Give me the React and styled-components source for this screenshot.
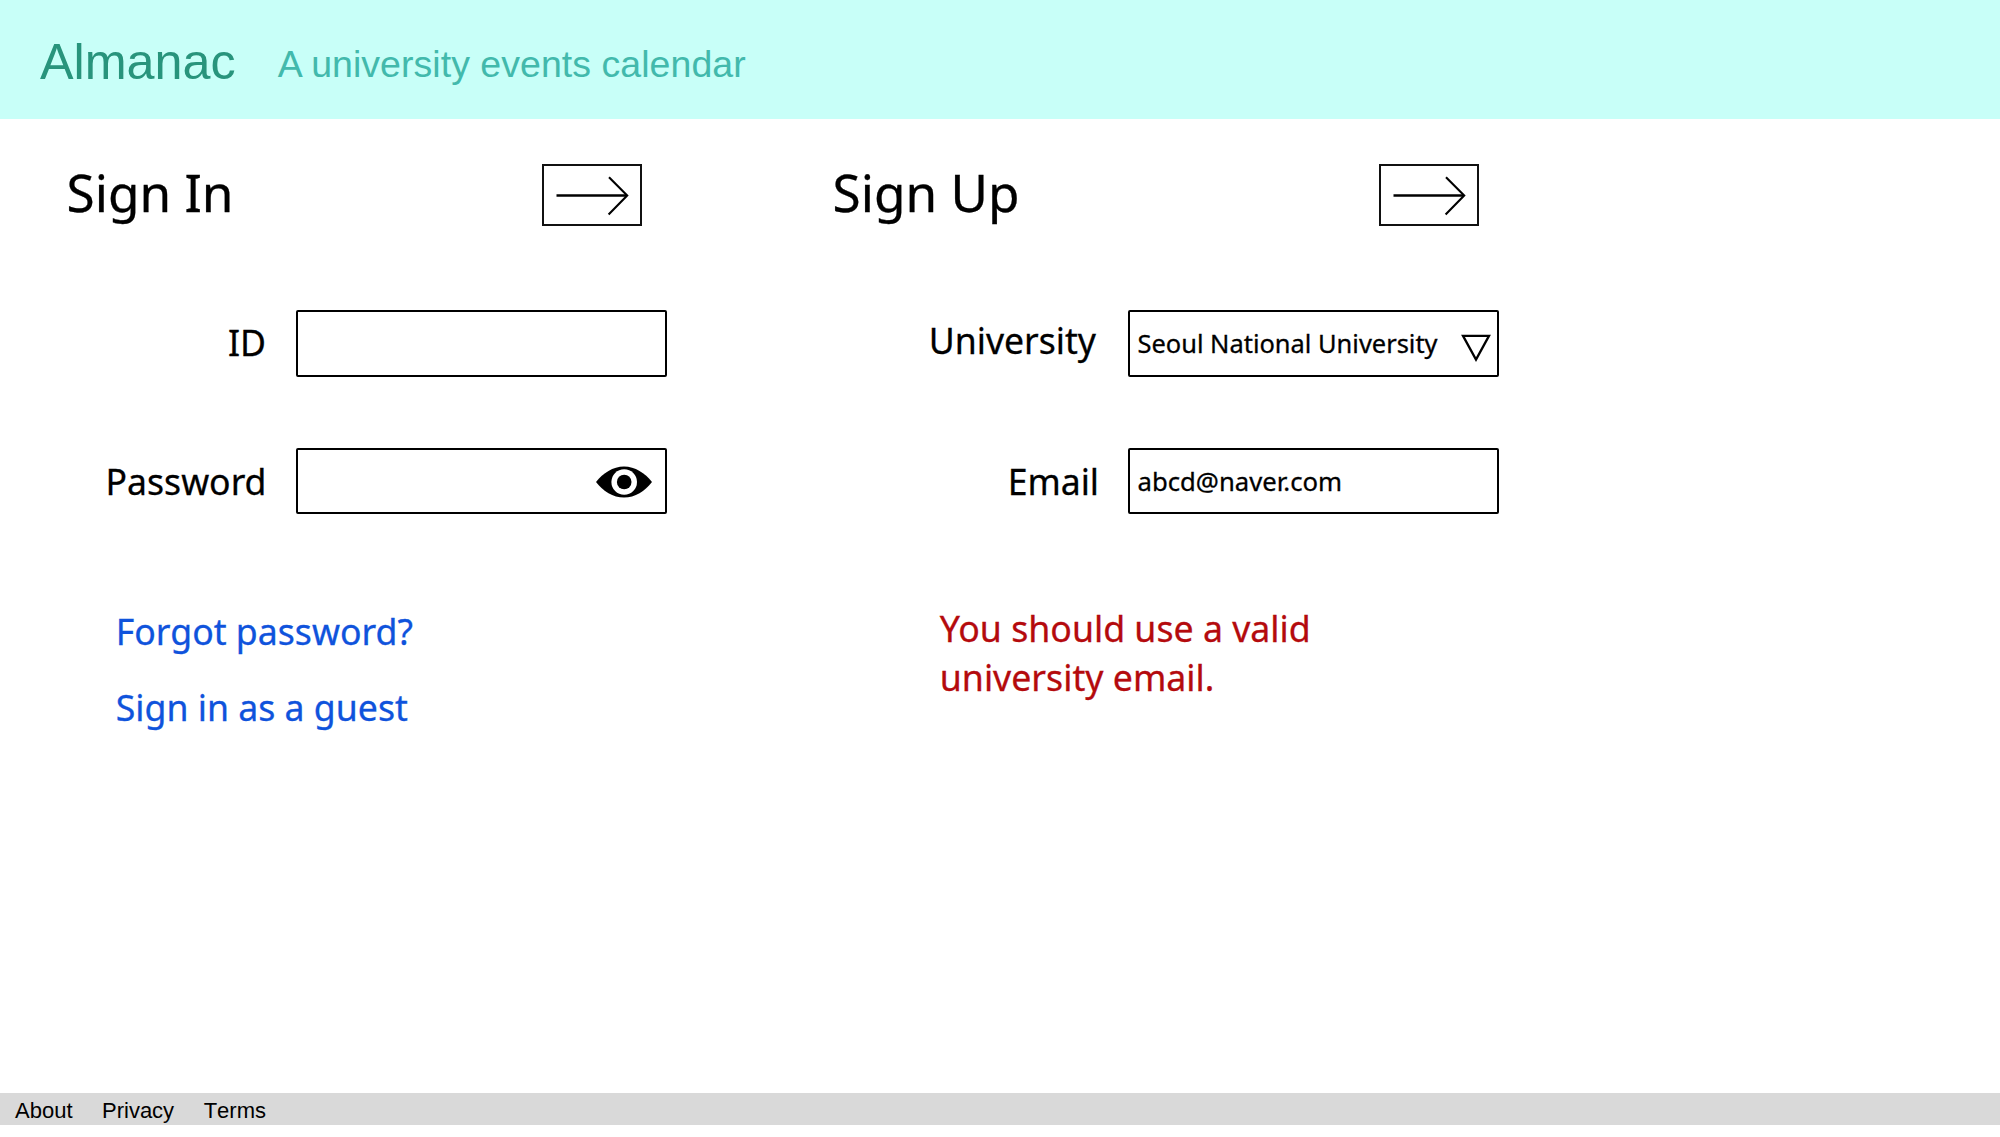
import React from 'react';
import styled, { createGlobalStyle } from 'styled-components';

const GlobalStyle = createGlobalStyle`
  *, *::before, *::after { box-sizing: border-box; }
  html, body { margin: 0; background: #fff; }
  body { font-family: "Noto Sans", "Open Sans", sans-serif; color: #000; }
`;

const Page = styled.div`
  display: flex;
  flex-direction: column;
  height: 1137px;
  padding-bottom: 12px;
  overflow: hidden;
`;

const Header = styled.header`
  display: flex;
  align-items: flex-start;
  gap: 42px;
  height: 119px;
  padding: 32.5px 40px 0;
  background: #c8fff8;
  font-family: "Liberation Sans", Arial, sans-serif;
`;

const Brand = styled.h1`
  margin: 0;
  font-size: 50.3px;
  font-weight: 400;
  line-height: 58px;
  color: #28947c;
`;

const Tagline = styled.p`
  margin: 10px 0 0;
  font-size: 37.5px;
  line-height: 42px;
  letter-spacing: 0.04px;
  font-kerning: normal;
  color: #42b9ac;
`;

const Main = styled.main`
  display: flex;
  flex: 1;
  gap: 166px;
  padding: 44.5px 0 0 66.5px;
  -webkit-text-stroke-width: 0.3px;
`;

const Panel = styled.section`
  display: flex;
  flex-direction: column;
  width: ${(p) => p.$width}px;
`;

const PanelHead = styled.div`
  display: flex;
  justify-content: space-between;
  height: 62px;
  padding-right: ${(p) => p.$inset}px;
`;

const PanelTitle = styled.h2`
  margin: -3px 0 0;
  font-size: 51.3px;
  font-weight: 400;
  line-height: 62px;
  white-space: nowrap;
`;

const SubmitButton = styled.button`
  width: 100px;
  height: 62px;
  padding: 0;
  border: 2px solid #111;
  background: #fff;
  svg { display: block; }
`;

const Fields = styled.div`
  display: flex;
  flex-direction: column;
  gap: 71.2px;
  margin-top: 84.5px;
`;

const Field = styled.div`
  display: flex;
  justify-content: flex-end;
  height: 66.5px;
  gap: ${(p) => p.$gap}px;
`;

const Label = styled.label`
  margin-top: ${(p) => p.$shift || 0}px;
  font-size: 35.6px;
  line-height: 67px;
`;

const Control = styled.div`
  display: flex;
  align-items: center;
  justify-content: space-between;
  width: 370.5px;
  height: 66.5px;
  padding: 0 ${(p) => p.$end || 8}px 0 7.5px;
  border: 2px solid #000;
  border-radius: 2px;
  background: #fff;
`;

const TextInput = styled.input`
  flex: 1;
  min-width: 0;
  height: 62px;
  padding: 1px 0 0;
  border: 0;
  outline: 0;
  background: transparent;
  font: 25.7px/61px "Noto Sans", sans-serif;
  color: #000;
  -webkit-text-stroke-width: 0.3px;
`;

const SelectedValue = styled.span`
  font-size: 25.45px;
  line-height: 63px;
  white-space: nowrap;
`;

const Links = styled.nav`
  display: flex;
  flex-direction: column;
  align-items: flex-start;
  gap: 28px;
  margin: 92.8px 0 0 49.3px;
`;

const TextLink = styled.a`
  font-size: 35.65px;
  line-height: 48px;
  color: #0f53dc;
  text-decoration: none;
`;

const ErrorText = styled.p`
  margin: 89.8px 0 0 107.3px;
  font-size: 35.7px;
  line-height: 48.8px;
  color: #b40a0d;
`;

const Footer = styled.footer`
  display: flex;
  gap: 29.5px;
  height: 32px;
  padding: 2px 15px 0;
  background: #d9d9d9;
  font: 22px/32px "Liberation Sans", Arial, sans-serif;
  font-kerning: none;
`;

const FooterLink = styled.a`
  color: #000;
`;

const ArrowIcon = () => (
  <svg width="96" height="58" viewBox="0 0 96 58" fill="none" stroke="#000">
    <path d="M12.5 29.5H82.5" strokeWidth="2.6" />
    <path d="M65 11.2L83.2 29.5L64.6 48.4" strokeWidth="2.1" />
  </svg>
);

const EyeIcon = styled((props) => (
  <svg {...props} width="56" height="32" viewBox="0 0 56 32">
    <path d="M0 16C7 7 17 .4 28 .4S49 7 56 16C49 25 39 31.6 28 31.6S7 25 0 16Z" fill="#000" />
    <circle cx="28.2" cy="16" r="12.8" fill="#fff" />
    <circle cx="28.2" cy="16" r="7.3" fill="#000" />
  </svg>
))`
  margin-top: 2px;
`;

const TriangleIcon = styled((props) => (
  <svg {...props} width="30" height="28" viewBox="0 0 30 28">
    <path d="M2 1.8H28L15 25.6Z" fill="none" stroke="#000" strokeWidth="2.3" />
  </svg>
))`
  margin-top: 9px;
`;

export default function App() {
  return (
    <>
      <GlobalStyle />
      <Page>
        <Header>
          <Brand>Almanac</Brand>
          <Tagline>A university events calendar</Tagline>
        </Header>
        <Main>
          <Panel $width={600}>
            <PanelHead $inset={24.5}>
              <PanelTitle>Sign In</PanelTitle>
              <SubmitButton aria-label="Sign In"><ArrowIcon /></SubmitButton>
            </PanelHead>
            <Fields>
              <Field $gap={30}>
                <Label htmlFor="user-id" $shift={-1.5}>ID</Label>
                <Control><TextInput id="user-id" /></Control>
              </Field>
              <Field $gap={29.5}>
                <Label htmlFor="password">Password</Label>
                <Control $end={13}>
                  <TextInput id="password" type="password" />
                  <EyeIcon />
                </Control>
              </Field>
            </Fields>
            <Links>
              <TextLink>Forgot password?</TextLink>
              <TextLink>Sign in as a guest</TextLink>
            </Links>
          </Panel>
          <Panel $width={666}>
            <PanelHead $inset={19.5}>
              <PanelTitle>Sign Up</PanelTitle>
              <SubmitButton aria-label="Sign Up"><ArrowIcon /></SubmitButton>
            </PanelHead>
            <Fields>
              <Field $gap={32}>
                <Label $shift={-2.8}>University</Label>
                <Control $end={6}>
                  <SelectedValue>Seoul National University</SelectedValue>
                  <TriangleIcon />
                </Control>
              </Field>
              <Field $gap={29}>
                <Label htmlFor="email">Email</Label>
                <Control><TextInput id="email" defaultValue="abcd@naver.com" /></Control>
              </Field>
            </Fields>
            <ErrorText>
              You should use a valid
              <br />
              university email.
            </ErrorText>
          </Panel>
        </Main>
        <Footer>
          <FooterLink>About</FooterLink>
          <FooterLink>Privacy</FooterLink>
          <FooterLink>Terms</FooterLink>
        </Footer>
      </Page>
    </>
  );
}
